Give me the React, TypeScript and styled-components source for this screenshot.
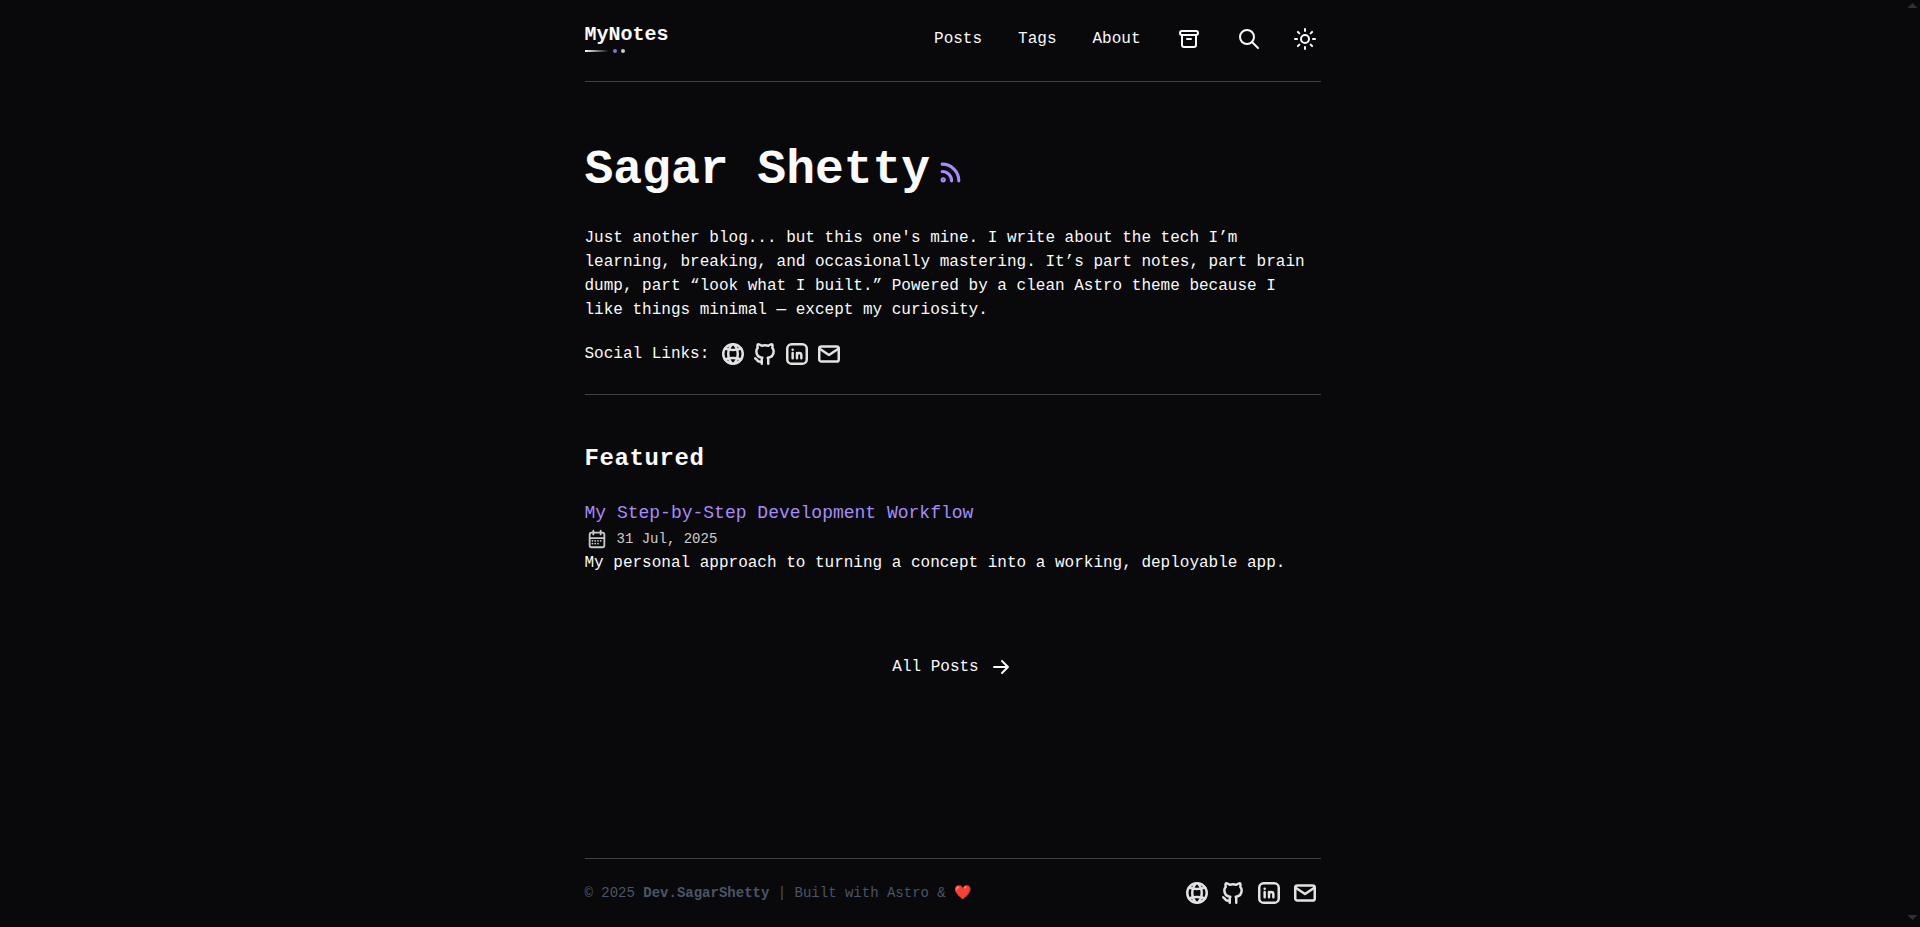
import React from "react";
import styled, { createGlobalStyle } from "styled-components";

const colors = {
  background: "#09090b",
  foreground: "#fafafa",
  accent: "#a78bfa",
  border: "#3f3f46",
  footer: "#4a5568",
  scrollArrow: "#303032",
};

const GlobalStyle = createGlobalStyle`
  *, *::before, *::after { box-sizing: border-box; }
  body {
    margin: 0;
    background: ${colors.background};
    color: ${colors.foreground};
    font-family: "Liberation Mono", monospace;
    font-size: 16px;
    line-height: 24px;
  }
  h1, h2, h3, p, ul { margin: 0; padding: 0; }
  ul { list-style: none; }
  a { color: inherit; text-decoration: none; }
`;

const Shell = styled.div`
  display: flex;
  align-items: flex-start;
`;

const ScrollRail = styled.div`
  position: sticky;
  top: 0;
  flex: none;
  display: flex;
  flex-direction: column;
  justify-content: space-between;
  align-items: center;
  width: 15px;
  height: 100vh;
  padding: 3px 0 7px;
`;

const ScrollArrow = styled.span<{ $down?: boolean }>`
  width: 10px;
  height: 5px;
  background: ${colors.scrollArrow};
  clip-path: ${(p) =>
    p.$down
      ? "polygon(0 0, 100% 0, 50% 100%)"
      : "polygon(50% 0, 100% 100%, 0 100%)"};
`;

const Page = styled.div`
  display: flex;
  flex-direction: column;
  flex: 1;
  min-height: 100vh;
  max-width: 768px;
  margin: 0 auto;
  padding: 0 16px;
`;

const Header = styled.header`
  display: flex;
  justify-content: space-between;
  align-items: flex-start;
  padding: 19px 0 22px;
  border-bottom: 1px solid ${colors.border};
`;

const Brand = styled.a`
  display: flex;
  flex-direction: column;
  padding-top: 2px;
  font-size: 20px;
  font-weight: 700;
  line-height: 28px;
`;

const BrandMark = styled.span`
  display: flex;
  align-items: center;
  gap: 4px;
  height: 4px;
`;

const BrandLine = styled.span`
  width: 24px;
  height: 2px;
  background: linear-gradient(to right, ${colors.foreground}, transparent);
`;

const BrandDot = styled.span<{ $accent?: boolean }>`
  width: 4px;
  height: 4px;
  border-radius: 50%;
  opacity: 0.8;
  background: ${(p) => (p.$accent ? colors.accent : colors.foreground)};
`;

const NavList = styled.ul`
  display: flex;
  align-items: center;
  gap: 20px;
`;

const NavLink = styled.a`
  display: block;
  padding: 8px;
`;

const IconLink = styled.a`
  display: flex;
  padding: 8px;
`;

const ThemeButton = styled.button`
  display: flex;
  padding: 8px 4px;
  border: 0;
  background: none;
  color: inherit;
  cursor: pointer;
`;

const Main = styled.main`
  flex: 1;
`;

const Hero = styled.section`
  padding: 64px 0 24px;
  border-bottom: 1px solid ${colors.border};
`;

const TitleRow = styled.div`
  display: flex;
  align-items: center;
`;

const Title = styled.h1`
  font-size: 48px;
  font-weight: 700;
  line-height: 48px;
`;

const FeedLink = styled.a`
  display: flex;
  margin: 5px 0 0 8px;
  color: ${colors.accent};
`;

const Intro = styled.p`
  margin-top: 32px;
`;

const SocialRow = styled.div`
  display: flex;
  align-items: center;
  gap: 11px;
  min-height: 32px;
  margin-top: 16px;
`;

const SocialList = styled.ul<{ $roomy?: boolean }>`
  display: flex;
  gap: ${(p) => (p.$roomy ? 10 : 6)}px;
`;

const SocialLink = styled.a`
  display: flex;
  opacity: 0.9;
`;

const Featured = styled.section`
  padding-top: 48px;
`;

const SectionTitle = styled.h2`
  font-size: 24px;
  font-weight: 600;
  line-height: 32px;
  letter-spacing: 0.025em;
`;

const PostCard = styled.article`
  margin-top: 24px;
`;

const PostTitle = styled.h3`
  color: ${colors.accent};
  font-size: 18px;
  font-weight: 500;
  line-height: 28px;
`;

const PostDate = styled.div`
  display: flex;
  align-items: center;
  gap: 9px;
  height: 24px;
  padding-left: 1px;
  font-size: 14px;
  line-height: 20px;
  opacity: 0.8;
`;

const AllPosts = styled.div`
  display: flex;
  justify-content: center;
  margin: 80px 0;
`;

const AllPostsLink = styled.a`
  display: flex;
  align-items: center;
  gap: 10px;
`;

const Footer = styled.footer`
  display: flex;
  justify-content: space-between;
  align-items: center;
  padding: 21px 3px 21px 0;
  border-top: 1px solid ${colors.border};
  color: ${colors.footer};
  font-size: 14px;
  line-height: 20px;
`;

const FooterIcons = styled.nav`
  color: ${colors.foreground};
`;

type IconProps = { size?: number; stroke?: number; children: React.ReactNode };

const Icon = ({ size = 24, stroke = 2, children }: IconProps) => (
  <svg
    width={size}
    height={size}
    viewBox="0 0 24 24"
    fill="none"
    stroke="currentColor"
    strokeWidth={stroke}
    strokeLinecap="round"
    strokeLinejoin="round"
    overflow="visible"
    aria-hidden="true"
  >
    {children}
  </svg>
);

const socials = [
  {
    label: "Website",
    href: "#website",
    icon: (
      <>
        <circle cx="12" cy="12" r="9" />
        <path d="M4.500 7q7.500 2.600 15 0M4.500 17q7.500 -2.600 15 0" />
        <path d="M11 3.200c-4.500 5 -4.500 12.600 0 17.600M13 3.200c4.500 5 4.500 12.600 0 17.600" />
      </>
    ),
  },
  {
    label: "GitHub",
    href: "#github",
    icon: (
      <path d="M9 19c-4.300 1.400 -4.300 -2.500 -6 -3m12 5v-3.500c0 -1 .1 -1.400 -.5 -2c2.800 -.3 5.500 -1.400 5.500 -6a4.600 4.600 0 0 0 -1.300 -3.200a4.200 4.200 0 0 0 -.1 -3.200s-1.100 -.3 -3.500 1.300a12.300 12.300 0 0 0 -6.200 0c-2.400 -1.600 -3.500 -1.300 -3.500 -1.300a4.200 4.200 0 0 0 -.1 3.200a4.600 4.600 0 0 0 -1.300 3.200c0 4.600 2.700 5.700 5.500 6c-.6 .6 -.6 1.200 -.5 2v3.500" />
    ),
  },
  {
    label: "LinkedIn",
    href: "#linkedin",
    icon: (
      <>
        <rect x="3" y="3" width="18" height="18" rx="4" />
        <path d="M8 11v5M8 8v.01M12 16v-5M16 16v-3a2 2 0 1 0 -4 0" />
      </>
    ),
  },
  {
    label: "Mail",
    href: "#mail",
    icon: (
      <>
        <rect x="3" y="5" width="18" height="14" rx="2" />
        <path d="M3 7l9 6l9 -6" />
      </>
    ),
  },
];

const Socials = ({ roomy }: { roomy?: boolean }) => (
  <SocialList $roomy={roomy}>
    {socials.map((s) => (
      <li key={s.label}>
        <SocialLink href={s.href} aria-label={s.label}>
          <Icon size={26} stroke={2.3}>{s.icon}</Icon>
        </SocialLink>
      </li>
    ))}
  </SocialList>
);

export default function App() {
  return (
    <>
      <GlobalStyle />
      <Shell>
        <Page>
          <Header>
            <Brand href="#home">
              MyNotes
              <BrandMark>
                <BrandLine />
                <BrandDot $accent />
                <BrandDot />
              </BrandMark>
            </Brand>
            <nav>
              <NavList>
                <li><NavLink href="#posts">Posts</NavLink></li>
                <li><NavLink href="#tags">Tags</NavLink></li>
                <li><NavLink href="#about">About</NavLink></li>
                <li>
                  <IconLink href="#archives" aria-label="Archives">
                    <Icon>
                      <rect x="3" y="4" width="18" height="4" rx="2" />
                      <path d="M5 8v10a2 2 0 0 0 2 2h10a2 2 0 0 0 2 -2v-10M10 12h4" />
                    </Icon>
                  </IconLink>
                </li>
                <li>
                  <IconLink href="#search" aria-label="Search">
                    <Icon>
                      <circle cx="10" cy="10" r="7" />
                      <path d="M21 21l-6 -6" />
                    </Icon>
                  </IconLink>
                </li>
                <li>
                  <ThemeButton type="button" aria-label="Toggle theme">
                    <Icon>
                      <circle cx="12" cy="12" r="4" />
                      <path d="M6.343 17.657l-1.414 1.414M6.343 6.343l-1.414 -1.414M17.657 6.343l1.414 -1.414M17.657 17.657l1.414 1.414M4 12h-2M12 4v-2M20 12h2M12 20v2" />
                    </Icon>
                  </ThemeButton>
                </li>
              </NavList>
            </nav>
          </Header>

          <Main>
            <Hero>
              <TitleRow>
                <Title>Sagar Shetty</Title>
                <FeedLink href="#rss" aria-label="RSS feed">
                  <Icon size={25} stroke={3}>
                    <circle cx="5" cy="19" r="1" />
                    <path d="M4 4a16 16 0 0 1 16 16M4 11a9 9 0 0 1 9 9" />
                  </Icon>
                </FeedLink>
              </TitleRow>
              <Intro>
                Just another blog... but this one's mine. I write about the tech
                I’m learning, breaking, and occasionally mastering. It’s part
                notes, part brain dump, part “look what I built.” Powered by a
                clean Astro theme because I like things minimal — except my
                curiosity.
              </Intro>
              <SocialRow>
                <span>Social Links:</span>
                <Socials />
              </SocialRow>
            </Hero>

            <Featured>
              <SectionTitle>Featured</SectionTitle>
              <PostCard>
                <PostTitle>
                  <a href="#workflow">My Step-by-Step Development Workflow</a>
                </PostTitle>
                <PostDate>
                  <Icon size={22}>
                    <path d="M4 7a2 2 0 0 1 2 -2h12a2 2 0 0 1 2 2v12a2 2 0 0 1 -2 2h-12a2 2 0 0 1 -2 -2v-12zM16 3v4M8 3v4M4 11h16" />
                    <path d="M7 14h.013M10.010 14h.005M13.010 14h.005M16.015 14h.005M13.015 17h.005M7.010 17h.005M10.010 17h.005" />
                  </Icon>
                  <time dateTime="2025-07-31">31 Jul, 2025</time>
                </PostDate>
                <p>
                  My personal approach to turning a concept into a working,
                  deployable app.
                </p>
              </PostCard>
            </Featured>

            <AllPosts>
              <AllPostsLink href="#all-posts">
                All Posts
                <Icon>
                  <path d="M5 12h14M13 18l6 -6M13 6l6 6" />
                </Icon>
              </AllPostsLink>
            </AllPosts>
          </Main>

          <Footer>
            <span>
              © 2025 <strong>Dev.SagarShetty</strong> | Built with Astro & ❤️
            </span>
            <FooterIcons aria-label="Social links">
              <Socials roomy />
            </FooterIcons>
          </Footer>
        </Page>
        <ScrollRail aria-hidden="true">
          <ScrollArrow />
          <ScrollArrow $down />
        </ScrollRail>
      </Shell>
    </>
  );
}
